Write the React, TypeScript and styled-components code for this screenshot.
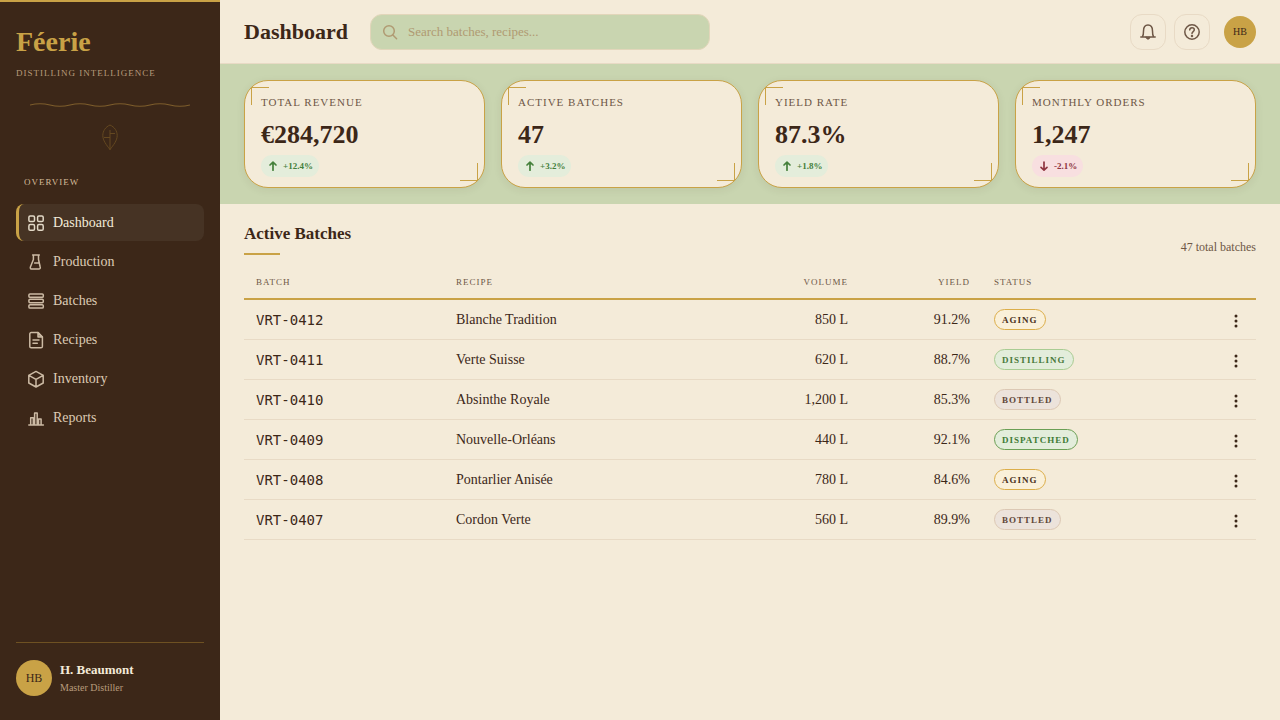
import React from "react";
import styled, { createGlobalStyle, css } from "styled-components";

const color = {
  bark: "#3c2718",
  parchment: "#f4ebd9",
  absinthe: "#c9d5b0",
  gold: "#c9a246",
  text: "#3c2718",
  muted: "#6e5746",
  hairline: "#e8dac5",
};

const serif = '"Liberation Serif", "Times New Roman", serif';
const mono = '"DejaVu Sans Mono", monospace';

const GlobalStyle = createGlobalStyle`
  *, *::before, *::after { box-sizing: border-box; }
  body {
    margin: 0;
    font-family: ${serif};
    color: ${color.text};
    background: ${color.parchment};
  }
  button, input { font-family: inherit; }
`;

const capitals = css`
  font-weight: 400;
  letter-spacing: 1px;
  text-transform: uppercase;
`;

const Shell = styled.div`
  display: flex;
  min-height: 100vh;
`;

/* Sidebar */

const Sidebar = styled.aside`
  display: flex;
  flex-direction: column;
  flex: 0 0 220px;
  padding: 24px 16px;
  border-top: 2px solid ${color.gold};
  background: ${color.bark};
  color: ${color.parchment};
`;

const Brand = styled.div`
  font-size: 28px;
  font-weight: 700;
  line-height: 32px;
  color: ${color.gold};
`;

const Tagline = styled.div`
  ${capitals}
  margin-top: 8px;
  font-size: 9px;
  line-height: 14px;
  white-space: nowrap;
  color: #b89c7c;
`;

const Ornament = styled.div`
  display: flex;
  flex-direction: column;
  align-items: center;
  gap: 14px;
  margin-top: 20px;
`;

const NavLabel = styled.h2`
  ${capitals}
  margin: 24px 0 16px;
  padding-left: 8px;
  font-size: 9px;
  line-height: 12px;
  color: #d4bb9a;
`;

const Nav = styled.nav`
  display: flex;
  flex-direction: column;
  gap: 2px;
`;

const NavItem = styled.a<{ $active?: boolean }>`
  display: flex;
  align-items: center;
  gap: 8px;
  height: 37px;
  padding: 0 8px;
  border-left: 3px solid ${(p) => (p.$active ? color.gold : "transparent")};
  border-radius: 8px;
  background: ${(p) => (p.$active ? "#463324" : "transparent")};
  color: ${(p) => (p.$active ? "#f4ebd9" : "#dccbb4")};
  font-size: 14px;
  line-height: 20px;
  text-decoration: none;

  svg { opacity: 0.9; }
`;

const Profile = styled.div`
  display: flex;
  align-items: center;
  gap: 8px;
  margin-top: auto;
  padding-top: 17px;
  border-top: 1px solid #6e5122;
`;

const Avatar = styled.div`
  display: grid;
  place-items: center;
  width: 36px;
  height: 36px;
  border-radius: 50%;
  background: ${color.gold};
  color: ${color.bark};
  font-size: 12px;
`;

const ProfileName = styled.div`
  font-size: 13px;
  font-weight: 700;
  line-height: 20px;
`;

const ProfileRole = styled.div`
  font-size: 10px;
  line-height: 16px;
  color: #b89c7c;
`;

/* Top bar */

const Main = styled.main`
  flex: 1;
  min-width: 0;
`;

const TopBar = styled.header`
  display: flex;
  align-items: center;
  gap: 22px;
  height: 64px;
  padding: 0 24px;
  border-bottom: 1px solid ${color.hairline};
`;

const PageTitle = styled.h1`
  margin: 0;
  font-size: 22px;
  font-weight: 700;
  line-height: 28px;
`;

const SearchBox = styled.label`
  display: flex;
  align-items: center;
  gap: 9px;
  flex: 0 1 340px;
  height: 36px;
  padding: 0 10px;
  border: 1px solid #e2d6ba;
  border-radius: 12px;
  background: ${color.absinthe};
  color: #b09a72;
`;

const SearchInput = styled.input`
  flex: 1;
  min-width: 0;
  padding: 0;
  border: 0;
  outline: 0;
  background: transparent;
  color: ${color.text};
  font-size: 13px;
  line-height: 20px;

  &::placeholder {
    color: #b09a72;
    opacity: 1;
  }
`;

const Actions = styled.div`
  display: flex;
  align-items: center;
  gap: 8px;
  margin-left: auto;
`;

const IconButton = styled.button`
  display: grid;
  place-items: center;
  width: 36px;
  height: 36px;
  padding: 0;
  border: 1px solid ${color.hairline};
  border-radius: 12px;
  background: transparent;
  color: ${color.muted};
`;

const AccountButton = styled.button`
  width: 32px;
  height: 32px;
  margin-left: 6px;
  padding: 0;
  border: 0;
  border-radius: 50%;
  background: ${color.gold};
  color: ${color.bark};
  font-size: 10px;
`;

/* Key figures */

const Figures = styled.section`
  display: grid;
  grid-template-columns: repeat(4, 1fr);
  gap: 16px;
  padding: 16px 24px;
  background: ${color.absinthe};
`;

const Card = styled.article`
  position: relative;
  padding: 12px 16px 10px;
  border: 1px solid ${color.gold};
  border-radius: 24px;
  background: ${color.parchment};
  box-shadow: 0 2px 8px rgba(60, 39, 24, 0.08);

  &::before,
  &::after {
    content: "";
    position: absolute;
    width: 18px;
    height: 18px;
    border: 0 solid ${color.gold};
  }
  &::before {
    top: 6px;
    left: 6px;
    border-width: 1px 0 0 1px;
  }
  &::after {
    right: 6px;
    bottom: 6px;
    border-width: 0 1px 1px 0;
  }
`;

const CardLabel = styled.h2`
  ${capitals}
  margin: 0;
  font-size: 11px;
  line-height: 18px;
  color: ${color.muted};
`;

const CardValue = styled.div`
  padding: 6px 0 2px;
  font-size: 26px;
  font-weight: 700;
  line-height: 36px;
`;

const Trend = styled.div<{ $down?: boolean }>`
  display: flex;
  align-items: center;
  gap: 4px;
  width: fit-content;
  height: 22px;
  padding: 0 6px;
  border-radius: 11px;
  background: ${(p) => (p.$down ? "#f8dfe0" : "#e4eddb")};
  color: ${(p) => (p.$down ? "#8f3540" : "#45803b")};
  font-size: 9px;
  font-weight: 700;
`;

/* Batches */

const Batches = styled.section`
  padding: 16px 24px;
`;

const BatchesHead = styled.div`
  display: flex;
  align-items: flex-end;
  justify-content: space-between;
  margin-bottom: 10px;
`;

const SectionTitle = styled.h2`
  margin: 0;
  font-size: 17px;
  font-weight: 700;
  line-height: 28px;

  &::after {
    content: "";
    display: block;
    width: 36px;
    height: 2px;
    margin-top: 5px;
    background: ${color.gold};
  }
`;

const Count = styled.span`
  font-size: 12px;
  line-height: 16px;
  color: ${color.muted};
`;

const Table = styled.table`
  width: 100%;
  table-layout: fixed;
  border-collapse: separate;
  border-spacing: 0;
`;

const Column = styled.col<{ $width?: number }>`
  width: ${(p) => (p.$width ? `${p.$width}px` : "auto")};
`;

const HeadCell = styled.th<{ $right?: boolean }>`
  ${capitals}
  height: 35px;
  padding: 0 12px;
  border-bottom: 2px solid ${color.gold};
  color: ${color.muted};
  font-size: 9px;
  line-height: 12px;
  text-align: ${(p) => (p.$right ? "right" : "left")};
`;

const Cell = styled.td<{ $right?: boolean; $mono?: boolean }>`
  height: 40px;
  padding: 0 12px;
  border-bottom: 1px solid ${color.hairline};
  font-family: ${(p) => (p.$mono ? mono : "inherit")};
  font-size: 14px;
  line-height: 20px;
  text-align: ${(p) => (p.$right ? "right" : "left")};
`;

type Status = "Aging" | "Distilling" | "Bottled" | "Dispatched";

const statusColors: Record<Status, { bg: string; line: string; ink: string }> = {
  Aging: { bg: "#faf0d9", line: "#dcae4a", ink: "#4a3322" },
  Distilling: { bg: "#e3eddb", line: "#a9cc93", ink: "#4a7a3c" },
  Bottled: { bg: "#ece3db", line: "#dcc8b4", ink: "#5f4738" },
  Dispatched: { bg: "#e3eddb", line: "#6b9f55", ink: "#3f7a35" },
};

const Badge = styled.span<{ $status: Status }>`
  ${capitals}
  display: flex;
  align-items: center;
  width: fit-content;
  height: 21px;
  padding: 0 7px;
  border: 1px solid ${(p) => statusColors[p.$status].line};
  border-radius: 11px;
  background: ${(p) => statusColors[p.$status].bg};
  color: ${(p) => statusColors[p.$status].ink};
  font-size: 9px;
  font-weight: 700;
  line-height: 12px;
`;

const MenuButton = styled.button`
  display: block;
  width: 16px;
  height: 20px;
  margin-left: auto;
  padding: 2px 0 0;
  border: 0;
  background: transparent;
  color: ${color.text};
`;

/* Icons */

const Icon = ({ children }: { children: React.ReactNode }) => (
  <svg
    width="18"
    height="18"
    viewBox="0 0 18 18"
    fill="none"
    stroke="currentColor"
    strokeWidth="1.5"
    strokeLinecap="round"
    strokeLinejoin="round"
    aria-hidden="true"
  >
    {children}
  </svg>
);

const GridIcon = () => (
  <Icon>
    <rect x="1.9" y="1.9" width="5.6" height="5.6" rx="1.3" />
    <rect x="10.6" y="1.9" width="5.6" height="5.6" rx="1.3" />
    <rect x="1.9" y="10.6" width="5.6" height="5.6" rx="1.3" />
    <rect x="10.6" y="10.6" width="5.6" height="5.6" rx="1.3" />
  </Icon>
);

const FlaskIcon = () => (
  <Icon>
    <path d="M5.600 1.900h6.700M6.400 1.900v4.600L3.400 14c-.4 1.200.3 2.100 1.400 2.100h7.100c1.100 0 1.700-1 1.300-2.100L11.500 6.500V1.900M7.600 9.900h3.600" />
  </Icon>
);

const StackIcon = () => (
  <Icon>
    <rect x="1.9" y="1.9" width="14.400" height="3.400" rx="1.1" />
    <rect x="1.9" y="7.3" width="14.400" height="3.400" rx="1.1" />
    <rect x="1.9" y="12.700" width="14.400" height="3.400" rx="1.1" />
  </Icon>
);

const DocumentIcon = () => (
  <Icon>
    <path d="M11 1.600H4.200c-.8 0-1.400.6-1.400 1.400v12.400c0 .8.6 1.400 1.400 1.400h9.800c.8 0 1.400-.6 1.400-1.400V6z" />
    <path d="M11 1.600V6h4.400z" fill="currentColor" fillOpacity="0.600" />
    <path d="M6 9.100h6M6 12.200h4.300" />
  </Icon>
);

const CubeIcon = () => (
  <Icon>
    <path d="M9 1.400l7.200 4v7.600L9 17l-7.200-4V5.400zM1.800 5.400L9 9.400l7.200-4M9 9.400V17" />
  </Icon>
);

const ChartIcon = () => (
  <Icon>
    <path d="M1.800 15.900h14.600M3.700 15.900V8.800h2.600v7.100M7.600 15.900V3.900h2.600v12M11.500 15.900v-5.800h2.600v5.800" />
  </Icon>
);

const SearchIcon = () => (
  <Icon>
    <circle cx="8" cy="8" r="5.300" />
    <path d="M11.900 11.900l3.700 3.800" />
  </Icon>
);

const BellIcon = () => (
  <Icon>
    <path d="M1.800 14h14.400M3.500 13.700C4.300 12.400 4.500 10.500 4.500 8C4.500 4.500 6 2.100 9 2.100S13.500 4.500 13.500 8C13.500 10.500 13.700 12.400 14.500 13.700" />
    <path d="M7 14.200h4c-.2 1.300-1 2-2 2s-1.800-.7-2-2z" fill="currentColor" strokeWidth="0.800" />
  </Icon>
);

const HelpIcon = () => (
  <Icon>
    <circle cx="9" cy="9" r="7.200" />
    <path d="M6.700 6.900c.1-1.400 1-2.200 2.300-2.200s2.300.8 2.300 2.100c0 1.700-2.300 1.800-2.300 3.600" />
    <circle cx="9" cy="12.900" r=".5" fill="currentColor" />
  </Icon>
);

const TrendIcon = ({ down }: { down?: boolean }) => (
  <svg
    width="12"
    height="12"
    viewBox="0 0 12 12"
    fill="none"
    stroke="currentColor"
    strokeWidth="1.700"
    strokeLinecap="round"
    strokeLinejoin="round"
    aria-hidden="true"
  >
    <path d={down ? "M6 2v8M3 7.300L6 10.100l3-2.800" : "M6 10.200V2.200M3 5L6 2.200L9 5"} />
  </svg>
);

const DotsIcon = () => (
  <svg width="16" height="18" viewBox="0 0 16 18" fill="currentColor" aria-hidden="true">
    <circle cx="8" cy="4" r="1.500" />
    <circle cx="8" cy="9" r="1.500" />
    <circle cx="8" cy="14" r="1.500" />
  </svg>
);

const Wave = () => (
  <svg width="160" height="10" viewBox="0 0 160 10" fill="none" stroke="#7d5d2c" aria-hidden="true">
    <path d="M0 5Q10 2.500 20 5T40 5T60 5T80 5T100 5T120 5T140 5T160 5" strokeWidth="1.200" />
  </svg>
);

const Leaf = () => (
  <svg width="24" height="28" viewBox="0 0 24 28" fill="none" stroke="#644820" aria-hidden="true">
    <path d="M12 1C7.500 3 4.800 7 4.800 11.500C4.800 16.500 8.500 21 12 25.500C15.500 21 19.200 16.500 19.200 11.500C19.200 7 16.500 3 12 1zM12 6v20M12 9.500h5M12 13.500H6" />
  </svg>
);

/* Data */

const navigation = [
  { label: "Dashboard", icon: GridIcon, active: true },
  { label: "Production", icon: FlaskIcon },
  { label: "Batches", icon: StackIcon },
  { label: "Recipes", icon: DocumentIcon },
  { label: "Inventory", icon: CubeIcon },
  { label: "Reports", icon: ChartIcon },
];

const figures = [
  { label: "Total Revenue", value: "€284,720", trend: "+12.4%" },
  { label: "Active Batches", value: "47", trend: "+3.2%" },
  { label: "Yield Rate", value: "87.3%", trend: "+1.8%" },
  { label: "Monthly Orders", value: "1,247", trend: "-2.1%", down: true },
];

const batches: { id: string; recipe: string; volume: string; rate: string; status: Status }[] = [
  { id: "VRT-0412", recipe: "Blanche Tradition", volume: "850 L", rate: "91.2%", status: "Aging" },
  { id: "VRT-0411", recipe: "Verte Suisse", volume: "620 L", rate: "88.7%", status: "Distilling" },
  { id: "VRT-0410", recipe: "Absinthe Royale", volume: "1,200 L", rate: "85.3%", status: "Bottled" },
  { id: "VRT-0409", recipe: "Nouvelle-Orléans", volume: "440 L", rate: "92.1%", status: "Dispatched" },
  { id: "VRT-0408", recipe: "Pontarlier Anisée", volume: "780 L", rate: "84.6%", status: "Aging" },
  { id: "VRT-0407", recipe: "Cordon Verte", volume: "560 L", rate: "89.9%", status: "Bottled" },
];

export default function App() {
  return (
    <>
      <GlobalStyle />
      <Shell>
        <Sidebar>
          <Brand>Féerie</Brand>
          <Tagline>Distilling Intelligence</Tagline>
          <Ornament>
            <Wave />
            <Leaf />
          </Ornament>
          <NavLabel>Overview</NavLabel>
          <Nav>
            {navigation.map(({ label, icon: Glyph, active }) => (
              <NavItem key={label} href={`#${label.toLowerCase()}`} $active={active}>
                <Glyph />
                {label}
              </NavItem>
            ))}
          </Nav>
          <Profile>
            <Avatar>HB</Avatar>
            <div>
              <ProfileName>H. Beaumont</ProfileName>
              <ProfileRole>Master Distiller</ProfileRole>
            </div>
          </Profile>
        </Sidebar>

        <Main>
          <TopBar>
            <PageTitle>Dashboard</PageTitle>
            <SearchBox htmlFor="search">
              <SearchIcon />
              <SearchInput id="search" type="text" aria-label="Search" placeholder="Search batches, recipes..." />
            </SearchBox>
            <Actions>
              <IconButton type="button" aria-label="Notifications">
                <BellIcon />
              </IconButton>
              <IconButton type="button" aria-label="Help">
                <HelpIcon />
              </IconButton>
              <AccountButton type="button">HB</AccountButton>
            </Actions>
          </TopBar>

          <Figures>
            {figures.map((figure) => (
              <Card key={figure.label}>
                <CardLabel>{figure.label}</CardLabel>
                <CardValue>{figure.value}</CardValue>
                <Trend $down={figure.down}>
                  <TrendIcon down={figure.down} />
                  {figure.trend}
                </Trend>
              </Card>
            ))}
          </Figures>

          <Batches>
            <BatchesHead>
              <SectionTitle>Active Batches</SectionTitle>
              <Count>47 total batches</Count>
            </BatchesHead>
            <Table>
              <colgroup>
                <Column $width={200} />
                <Column />
                <Column $width={120} />
                <Column $width={122} />
                <Column $width={214} />
                <Column $width={60} />
              </colgroup>
              <thead>
                <tr>
                  <HeadCell scope="col">Batch</HeadCell>
                  <HeadCell scope="col">Recipe</HeadCell>
                  <HeadCell scope="col" $right>Volume</HeadCell>
                  <HeadCell scope="col" $right>Yield</HeadCell>
                  <HeadCell scope="col">Status</HeadCell>
                  <HeadCell scope="col" aria-label="Actions" />
                </tr>
              </thead>
              <tbody>
                {batches.map((batch) => (
                  <tr key={batch.id}>
                    <Cell $mono>{batch.id}</Cell>
                    <Cell>{batch.recipe}</Cell>
                    <Cell $right>{batch.volume}</Cell>
                    <Cell $right>{batch.rate}</Cell>
                    <Cell>
                      <Badge $status={batch.status}>{batch.status}</Badge>
                    </Cell>
                    <Cell>
                      <MenuButton type="button" aria-label={`Actions for ${batch.id}`}>
                        <DotsIcon />
                      </MenuButton>
                    </Cell>
                  </tr>
                ))}
              </tbody>
            </Table>
          </Batches>
        </Main>
      </Shell>
    </>
  );
}
